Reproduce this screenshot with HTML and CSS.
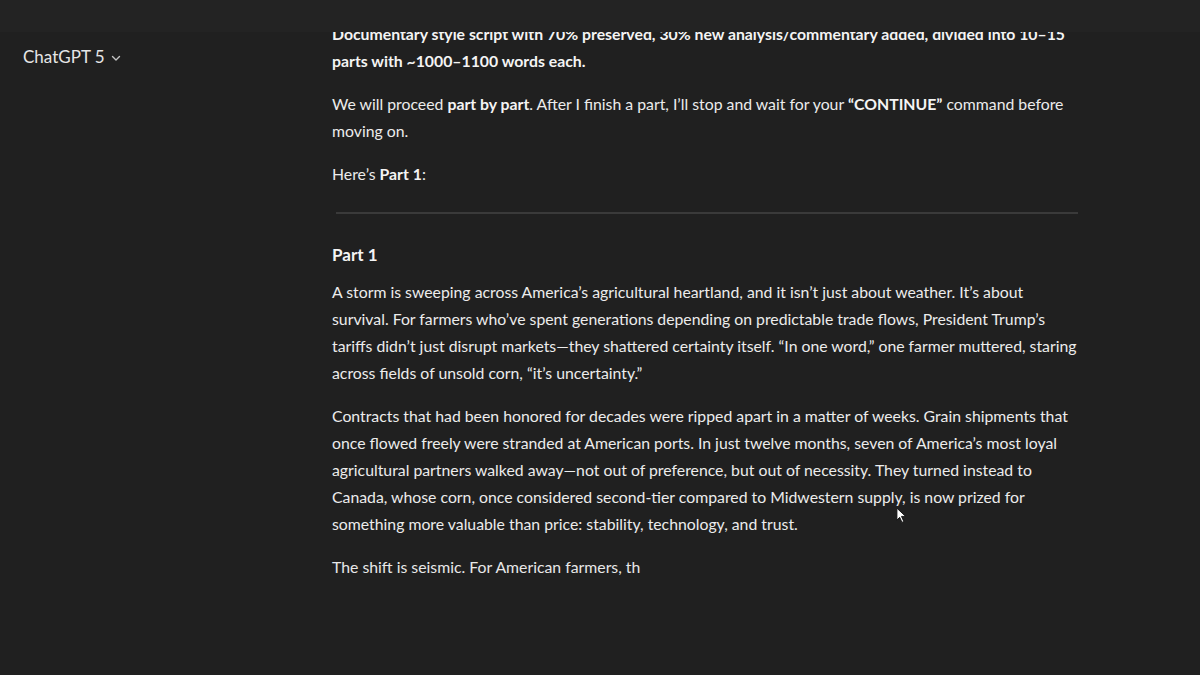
FILE: index.html
```html
<!DOCTYPE html>
<html lang="en">
<head>
<meta charset="utf-8">
<title>ChatGPT 5</title>
<link rel="stylesheet" href="styles.css">
</head>
<body>
<div class="app">
  <header class="topbar">
    <div class="model">ChatGPT 5 <svg class="chev" viewBox="0 0 12 12" width="12" height="12"><path d="M2.5 4.5 L6 8 L9.5 4.5" fill="none" stroke="currentColor" stroke-width="1.4" stroke-linecap="round" stroke-linejoin="round"/></svg></div>
  </header>
  <div class="topshade"></div>
  <main class="thread">
    <div class="msg">
      <p class="first"><b>Documentary style script with 70% preserved, 30% new analysis/commentary added, divided into 10–15<br>parts with ~1000–1100 words each.</b></p>
      <p>We will proceed <b>part by part</b>. After I finish a part, I’ll stop and wait for your <b>“CONTINUE”</b> command before<br>moving on.</p>
      <p>Here’s <b>Part 1</b>:</p>
      <hr class="rule">
      <h3 class="part">Part 1</h3>
      <p>A storm is sweeping across America’s agricultural heartland, and it isn’t just about weather. It’s about<br>survival. For farmers who’ve spent generations depending on predictable trade flows, President Trump’s<br>tariffs didn’t just disrupt markets—they shattered certainty itself. “In one word,” one farmer muttered, staring<br>across fields of unsold corn, “it’s uncertainty.”</p>
      <p>Contracts that had been honored for decades were ripped apart in a matter of weeks. Grain shipments that<br>once flowed freely were stranded at American ports. In just twelve months, seven of America’s most loyal<br>agricultural partners walked away—not out of preference, but out of necessity. They turned instead to<br>Canada, whose corn, once considered second-tier compared to Midwestern supply, is now prized for<br>something more valuable than price: stability, technology, and trust.</p>
      <p class="streaming">The shift is seismic. For American farmers, th</p>
    </div>
  </main>
  <svg class="cursor" viewBox="0 0 12 18" width="11" height="17"><path d="M1 1 L1 14 L4 11 L6.5 16.5 L8.5 15.5 L6 10 L10.5 10 Z" fill="#fff" stroke="#111" stroke-width="1"/></svg>
</div>
</body>
</html>
```
FILE: styles.css
```css
* { box-sizing: border-box; }
html, body {
  margin: 0;
  height: 100%;
  background: #1f1f1f;
  overflow: hidden;
}
body {
  font-family: Lato, "Open Sans", sans-serif;
  color: #ececec;
}
.app {
  position: relative;
  width: 1200px;
  height: 675px;
  overflow: hidden;
  background: #202020;
}
.topbar {
  position: absolute;
  left: 0;
  top: 0;
  width: 332px;
  height: 100px;
  padding: 46px 0 0 23px;
  z-index: 3;
}
.model {
  display: flex;
  align-items: center;
  gap: 5px;
  font-size: 17px;
  color: #e6e6e6;
}
.chev { color: #c4c4c4; margin-top: 2px; }
.topshade {
  position: absolute;
  left: 0;
  top: 0;
  width: 1200px;
  height: 32px;
  background: #232323;
  z-index: 2;
}
.thread {
  padding-left: 332px;
  padding-top: 20px;
}
.msg {
  width: 760px;
  font-size: 15.8px;
  line-height: 27px;
}
.msg p {
  margin: 0 0 16px;
  white-space: nowrap;
}
.msg b { font-weight: 700; color: #f4f4f4; }
.rule {
  border: 0;
  height: 2px;
  background: #3a3a3a;
  margin: 25px 2px 28px 4px;
  width: 742px;
}
.part {
  font-size: 17px;
  font-weight: 700;
  margin: 0 0 10px;
  line-height: 26px;
  color: #f4f4f4;
}
.streaming { color: #e8e8e8; }
.cursor {
  position: absolute;
  left: 896px;
  top: 507px;
  z-index: 4;
}
```
